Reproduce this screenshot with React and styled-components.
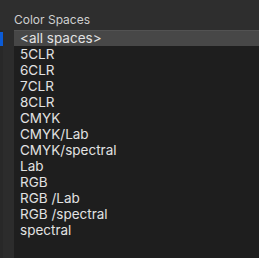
import styled, { createGlobalStyle } from 'styled-components';

const SPACES = [
  '<all spaces>',
  '5CLR',
  '6CLR',
  '7CLR',
  '8CLR',
  'CMYK',
  'CMYK/Lab',
  'CMYK/spectral',
  'Lab',
  'RGB',
  'RGB /Lab',
  'RGB /spectral',
  'spectral'
];

const GlobalStyle = createGlobalStyle`
  html, body {
    margin: 0;
    padding: 0;
    background: #2e2e2e;
  }
  body {
    font-family: Inter, "Liberation Sans", sans-serif;
    -webkit-font-smoothing: antialiased;
  }
`;

export default function App() {
  const selected = 0;
  return (
    <>
      <GlobalStyle />
      <Panel>
        <Header>Color Spaces</Header>
        <Body>
          <Rail>
            <RailMark />
          </Rail>
          <Gutter />
          <List>
            {SPACES.map((name, i) => (
              <Row key={name} $selected={i === selected}>
                {name}
              </Row>
            ))}
          </List>
        </Body>
      </Panel>
    </>
  );
}

const Panel = styled.div`
  width: 259px;
  height: 258px;
  display: flex;
  flex-direction: column;
  background: #2e2e2e;
  overflow: hidden;
`;

const Header = styled.div`
  height: 30px;
  padding: 13px 0 0 14px;
  box-sizing: border-box;
  font-size: 12px;
  line-height: 14px;
  color: #cfcfcf;
`;

const Body = styled.div`
  flex: 1;
  display: flex;
`;

const Rail = styled.div`
  width: 3px;
  padding-top: 2px;
  background: #282828;
`;

const RailMark = styled.div`
  height: 14px;
  background: #0b5bd6;
`;

const Gutter = styled.div`
  width: 11px;
  background: #2c2c2c;
`;

const List = styled.div`
  flex: 1;
  display: flex;
  flex-direction: column;
  background: #1e1e1e;
`;

const Row = styled.div`
  height: 16px;
  line-height: 16px;
  padding-left: 6px;
  font-size: 13.5px;
  color: #e2e2e2;
  white-space: nowrap;
  background: ${(p) => (p.$selected ? '#474747' : 'transparent')};
  box-shadow: ${(p) => (p.$selected ? 'inset 0 1px 0 #525252' : 'none')};
`;
